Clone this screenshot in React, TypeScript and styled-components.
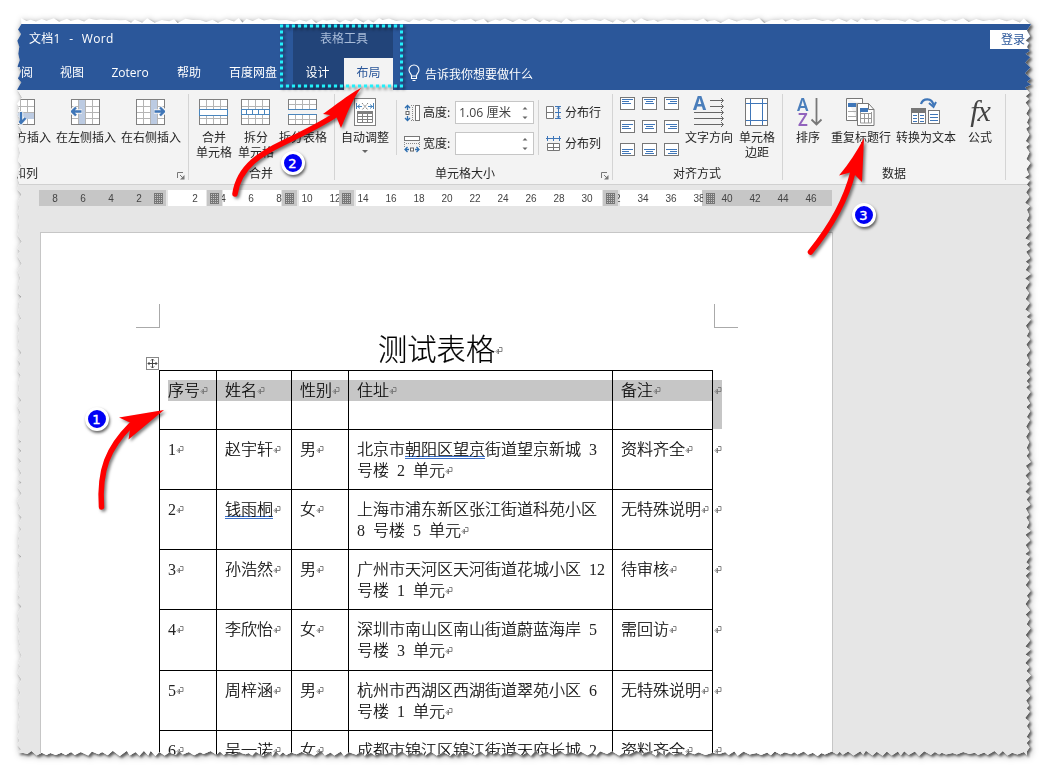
import React from "react";
import styled, { createGlobalStyle, css } from "styled-components";

const Global = createGlobalStyle`
  * { box-sizing: border-box; }
  body { margin: 0; background: #fff; overflow: hidden; }
  svg { display: block; }
`;

const ui = `"Open Sans", "Noto Sans CJK SC", sans-serif`;
const cjk = `"Noto Sans CJK SC", sans-serif`;

/* ---------- torn paper outline ---------- */
const W = 1016;
const H = 740;

function tornOutline(): string {
  let seed = 11;
  const rnd = () => {
    seed = (seed * 16807) % 2147483647;
    return seed / 2147483647;
  };
  const pts: string[] = [];
  const add = (x: number, y: number) => pts.push(`${x.toFixed(1)}px ${y.toFixed(1)}px`);
  let up = true;
  for (let x = 5; x < W - 6; x += 3.5 + rnd() * 5) {
    add(x, up ? 1 + rnd() * 2 : 3 + rnd() * 3);
    up = !up;
  }
  for (let y = 4; y < H - 5; y += 2.5 + rnd() * 4) {
    add(up ? W - 1 - rnd() * 2 : W - 5 - rnd() * 2, y);
    up = !up;
  }
  for (let x = W - 5; x > 5; x -= 2.5 + rnd() * 5) {
    add(x, up ? H - 1 - rnd() * 2 : H - 4 - rnd() * 2.5);
    up = !up;
  }
  for (let y = H - 4; y > 4; y -= 3 + rnd() * 5) {
    add(up ? 1 + rnd() * 1.5 : 3 + rnd() * 3, y);
    up = !up;
  }
  return `polygon(${pts.join(",")})`;
}

const Stage = styled.div`
  position: relative;
  width: 1048px;
  height: 773px;
  padding: 17px 16px;
  overflow: hidden;
  background: #fff;
`;
const Shadow = styled.div`
  filter: drop-shadow(2px 2px 1px rgba(0, 0, 0, 0.5)) drop-shadow(1px 1px 3px rgba(0, 0, 0, 0.35));
`;
const Sheet = styled.div`
  width: ${W}px;
  height: ${H}px;
  padding-top: 7px;
  background: #fff;
  clip-path: ${tornOutline()};
  display: flex;
  flex-direction: column;
  font: 12px/15px ${ui};
  color: #262626;
`;

/* ---------- header ---------- */
const Header = styled.header`
  height: 66px;
  flex: none;
  background: #2b579a;
  color: #fff;
  display: grid;
  grid-template-columns: 277px 100px 1fr;
`;
const HeaderPart = styled.div<{ $dark?: boolean }>`
  display: grid;
  grid-template-rows: 34px 32px;
  background: ${(p) => (p.$dark ? "#224479" : "transparent")};
`;
const DocTitle = styled.div`
  padding: 7px 0 0 13px;
  white-space: pre;
  line-height: 16px;
  font-size: 12px;
  letter-spacing: 0.3px;
  word-spacing: 0.8px;
  font-family: ${ui};
`;
const ToolTitle = styled.div`
  padding: 7px 0 0 2px;
  text-align: center;
  color: #a9bcd9;
  line-height: 16px;
`;
const Tabs = styled.nav`
  display: flex;
  line-height: 29px;
  white-space: nowrap;
`;
const Tab = styled.span<{ $w: number; $on?: boolean }>`
  width: ${(p) => p.$w}px;
  flex: none;
  text-align: center;
  ${(p) =>
    p.$on &&
    css`
      background: #f3f3f3;
      color: #2b579a;
    `}
`;
const LeftTabs = styled(Tabs)`
  margin-left: -7px;
`;
const TellMe = styled.div`
  display: flex;
  gap: 5px;
  padding: 6px 0 0 15px;
  line-height: 22px;
`;
const SignRow = styled.div`
  display: flex;
  justify-content: flex-end;
  padding-top: 6px;
`;
const SignIn = styled.span`
  width: 42px;
  height: 19px;
  padding-left: 11px;
  background: #fff;
  color: #2b579a;
  line-height: 19px;
`;

/* ---------- ribbon ---------- */
const Ribbon = styled.section`
  height: 95px;
  flex: none;
  padding: 4px 0;
  display: flex;
  background: #f3f3f3;
  border-bottom: 1px solid #d0d0d0;
  font-family: ${cjk};
`;
const Group = styled.div<{ $w: number; $pad?: number }>`
  position: relative;
  width: ${(p) => p.$w}px;
  flex: none;
  display: grid;
  grid-template-rows: 71px 15px;
  border-right: 1px solid #d4d4d4;
  padding-left: ${(p) => p.$pad ?? 0}px;
`;
const Row = styled.div<{ $shift?: number }>`
  display: flex;
  margin-left: ${(p) => p.$shift ?? 0}px;
`;
const BigButton = styled.div<{ $w: number; $ml?: number }>`
  width: ${(p) => p.$w}px;
  margin-left: ${(p) => p.$ml ?? 0}px;
  flex: none;
  padding-top: 4px;
  display: flex;
  flex-direction: column;
  align-items: center;
  text-align: center;
  white-space: nowrap;
`;
const ButtonText = styled.span`
  margin-top: 1px;
  white-space: pre;
`;
const GroupLabel = styled.div<{ $ml: number }>`
  margin-left: ${(p) => p.$ml}px;
  white-space: nowrap;
`;
const Launcher = styled.svg`
  position: absolute;
  right: 3px;
  bottom: 0;
`;
const Rule = styled.div<{ $ml: number }>`
  width: 1px;
  height: 55px;
  margin: 6px 0 0 ${(p) => p.$ml}px;
  background: #d4d4d4;
`;
const SizeStack = styled.div<{ $ml: number }>`
  margin: 7px 0 0 ${(p) => p.$ml}px;
  display: flex;
  flex-direction: column;
  gap: 8px;
`;
const SizeRow = styled.div`
  height: 23px;
  display: flex;
  align-items: center;
`;
const SizeName = styled.span`
  width: 34px;
  padding: 0 0 2px 2px;
`;
const Spinner = styled.div`
  width: 79px;
  height: 23px;
  padding: 0 4px 0 3px;
  display: flex;
  align-items: center;
  justify-content: space-between;
  border: 1px solid #c6c6c6;
  background: #fff;
  color: #444;
  font-family: ${ui};
  font-size: 12.3px;
`;
const DistName = styled.span`
  padding: 0 0 2px 4px;
`;
const AlignGrid = styled.div`
  display: grid;
  grid-template-columns: repeat(3, 15px);
  grid-auto-rows: 13px;
  gap: 10px 7px;
  margin: 3px 6px 0 0;
`;
const LetterIcon = styled.svg`
  overflow: visible;
  font-family: "Noto Sans", sans-serif;
`;
const DirectionBox = styled.div`
  height: 30px;
  & > svg {
    margin-top: -2px;
  }
`;

function GridBase() {
  return (
    <>
      <rect x=".5" y=".5" width="28" height="25" fill="#fff" stroke="#808080" />
      <path d="M7.5 1v24M14.5 1v24M21.5 1v24M1 7.5h27M1 13.5h27M1 19.5h27" stroke="#b4b4b4" />
    </>
  );
}
const IconSvg = styled.svg<{ $odd: boolean }>`
  flex: none;
  margin-right: ${(p) => (p.$odd ? 1 : 0)}px;
`;
const Icon = ({ children, w = 29, h = 30 }: { children: React.ReactNode; w?: number; h?: number }) => (
  <IconSvg $odd={w % 2 === 1} width={w} height={h} viewBox={`0 -1 ${w} ${h}`}>
    {children}
  </IconSvg>
);
const InsertBelow = () => (
  <Icon>
    <GridBase />
    <rect x="7" y="14" width="21" height="6" fill="#bccbe2" />
    <path d="M15 12v11M10.500 19l4.500 5 4.500-5" stroke="#f3f3f3" fill="none" strokeWidth="4.500" />
    <path d="M15 13v10M10.500 19l4.500 5 4.500-5" stroke="#3f76b8" fill="none" strokeWidth="2.400" />
  </Icon>
);
const InsertLeft = () => (
  <Icon>
    <GridBase />
    <rect x="8" y="1" width="6" height="24" fill="#bccbe2" />
    <path d="M11 12.500H1M5 8l-4.500 4.500L5 17" stroke="#f3f3f3" fill="none" strokeWidth="4.500" />
    <path d="M10.500 12.500H1M5 8.500l-4 4 4 4" stroke="#3f76b8" fill="none" strokeWidth="2.400" />
  </Icon>
);
const InsertRight = () => (
  <Icon>
    <GridBase />
    <rect x="15" y="1" width="6" height="24" fill="#bccbe2" />
    <path d="M18 12.500h10M24 8l4.500 4.500L24 17" stroke="#f3f3f3" fill="none" strokeWidth="4.500" />
    <path d="M18.500 12.500H28M24 8.500l4 4-4 4" stroke="#3f76b8" fill="none" strokeWidth="2.400" />
  </Icon>
);
const MergeCells = () => (
  <Icon>
    <GridBase />
    <rect x=".5" y="10.500" width="28" height="6" fill="#fff" stroke="#4a86bd" />
  </Icon>
);
const SplitCells = () => (
  <Icon>
    <GridBase />
    <rect x=".5" y="10.500" width="28" height="5" fill="#fff" stroke="#4a86bd" />
    <path d="M5.500 10v6M11.500 10v6M17.500 10v6M23.500 10v6" stroke="#4a86bd" />
  </Icon>
);
const SplitTable = () => (
  <Icon>
    <rect x=".5" y=".5" width="28" height="10" fill="#fff" stroke="#808080" />
    <path d="M7.500 1v9M14.500 1v9M21.500 1v9M1 5.500h27" stroke="#b4b4b4" />
    <path d="M0 10.500h29" stroke="#4a86bd" />
    <rect x=".5" y="15.500" width="28" height="10" fill="#fff" stroke="#808080" />
    <path d="M7.500 16v9M14.500 16v9M21.500 16v9M1 20.500h27" stroke="#b4b4b4" />
    <path d="M0 15.500h29" stroke="#4a86bd" />
  </Icon>
);
const AutoFit = () => (
  <Icon w={22}>
    <rect x=".5" y="-.5" width="21" height="27" fill="#fff" stroke="#808080" />
    <path d="M2.500 4v6M19.500 4v6M3 7.500h5M14 7.500h5M6 5.500l-2.500 2L6 9.500M16 5.500l2.500 2-2.500 2" stroke="#4a86bd" fill="none" />
    <path d="M8 4l6 7M14 4l-6 7" stroke="#808080" strokeDasharray="1.500 .7" />
    <rect x="3" y="12" width="16" height="3" fill="#808080" />
    <path d="M3.500 15v8.500h15V15M8.500 15v8M13.500 15v8M4 17.500h14M4 20.500h14" stroke="#808080" fill="none" />
  </Icon>
);
const HeightIcon = () => (
  <svg width="17" height="18">
    <path d="M3.500 2v4M3.500 12v4M1 4l2.500-2.500L6 4M1 14l2.500 2.500L6 14" stroke="#2f6fb0" fill="none" strokeWidth="1.300" />
    <rect x="2" y="7.500" width="3" height="3" fill="#fff" stroke="#666" />
    <path d="M7 1.500h4M7 16.500h4M8.500 3v13" stroke="#888" strokeDasharray="1 1" />
    <rect x="11.500" y="1.500" width="4" height="15" fill="#fff" stroke="#777" />
  </svg>
);
const WidthIcon = () => (
  <svg width="17" height="18">
    <rect x=".5" y="1.500" width="15" height="4" fill="#fff" stroke="#777" />
    <path d="M.5 7v5M15.500 7v5M2 8.500h13" stroke="#888" strokeDasharray="1 1" />
    <path d="M1 14.500h4M11 14.500h4M3.500 12L1 14.500 3.500 17M12.500 12l2.500 2.500-2.500 2.500" stroke="#2f6fb0" fill="none" strokeWidth="1.300" />
    <rect x="6.500" y="13" width="3" height="3" fill="#fff" stroke="#666" />
  </svg>
);
const DistRows = () => (
  <svg width="15" height="16">
    <path d="M.5 1.500h7v12h-7zM.5 7.500h7" stroke="#777" fill="#fff" />
    <path d="M9 1.500h6M9 7.500h6M9 13.500h6M12.500 2v11M10.800 4l1.700-2 1.700 2M10.800 11l1.700 2 1.700-2" stroke="#3f76b8" fill="none" />
  </svg>
);
const DistCols = () => (
  <svg width="15" height="16">
    <path d="M1.500 7.500h12v7h-12zM7.500 7.500v7M1.500 11.500h12" stroke="#777" fill="#fff" />
    <path d="M1.500 0v5M7.500 0v5M13.500 0v5M0 2.500h15" stroke="#3f76b8" fill="none" />
  </svg>
);
const SpinArrows = () => (
  <svg width="8" height="17">
    <path d="M1.500 5.500L4 3l2.500 2.500zM1.500 12.500L4 15l2.500-2.500z" fill="#666" />
  </svg>
);
function AlignIcon({ v, h }: { v: number; h: number }) {
  const y0 = [2.5, 4.5, 6.5][v];
  const widths = [11, 7, 9];
  return (
    <svg width="15" height="13">
      <rect x=".5" y=".5" width="14" height="12" fill="#fff" stroke="#777" />
      {widths.map((w, i) => {
        const x = h === 0 ? 2 : h === 1 ? (15 - w) / 2 : 13 - w;
        return <path key={i} d={`M${x} ${y0 + i * 2}h${w}`} stroke="#3f76b8" />;
      })}
    </svg>
  );
}
const TextDirection = () => (
  <LetterIcon width="34" height="34" viewBox="0 0 34 34">
    <text x="1" y="14" fontSize="19" fontWeight="700" fill="#4a7ebb">A</text>
    <path d="M18 4.500h13M18 10.500h13M2 16.500h29M2 22.500h29M2 28.500h29" stroke="#666" />
    <path d="M29 2l2.500 2.500L29 7M29 8l2.500 2.500L29 13M29 14l2.500 2.500L29 19M29 20l2.500 2.500L29 25M29 26l2.500 2.500L29 31" stroke="#666" fill="none" />
  </LetterIcon>
);
const Margins = () => (
  <Icon w={23}>
    <rect x=".5" y="-.5" width="22" height="27" fill="#fff" stroke="#777" />
    <path d="M5.500 0v26M17.500 0v26M1 4.500h21M1 21.500h21" stroke="#3f76b8" />
  </Icon>
);
const SortIcon = () => (
  <LetterIcon width="24" height="30" viewBox="0 0 24 30">
    <text x="1" y="12.500" fontSize="17" fontWeight="600" fill="#4a7ebb">A</text>
    <text x="2" y="27.500" fontSize="17" fontWeight="600" fill="#9163bd">Z</text>
    <path d="M20.500 0v26M15.500 21.500l5 5 5-5" stroke="#777" strokeWidth="1.800" fill="none" />
  </LetterIcon>
);
const RepeatHeader = () => (
  <Icon w={29}>
    <path d="M.5-.5h16v5M.5-.5v22h11" fill="#fff" stroke="#777" />
    <path d="M2 7.500h9M2 12.500h9M2 17.500h9M10.500 4v17" stroke="#aaa" />
    <rect x="2" y="4" width="8" height="4" fill="#3f76b8" />
    <path d="M11.500 4.500h11l5.500 6v16H11.500z" fill="#fff" stroke="#777" />
    <path d="M22.500 4.500v6H28" fill="none" stroke="#777" />
    <path d="M14.500 10v14h11V13M14 14.500h11M14 19.500h11M18.500 14v10M22.500 14v10" stroke="#999" fill="none" />
    <rect x="14" y="9" width="8" height="4" fill="#3f76b8" />
  </Icon>
);
const ToText = () => (
  <Icon w={29}>
    <path d="M10 5C12-1 21-1.500 22.500 6" stroke="#3f76b8" fill="none" strokeWidth="2.200" />
    <path d="M18 4l4.500 4L25 3" stroke="#3f76b8" fill="none" strokeWidth="2" />
    <rect x=".5" y="9.500" width="14" height="15" fill="#fff" stroke="#777" />
    <rect x="0" y="9" width="15" height="5" fill="#777" />
    <path d="M7.500 14v11" stroke="#777" />
    <path d="M2 16.500h4M2 19.500h4M2 22.500h4M9 16.500h4M9 19.500h4M9 22.500h4" stroke="#3f76b8" />
    <rect x="17.500" y="11.500" width="11" height="13" fill="#fff" stroke="#777" />
    <path d="M19 15.500h8M19 18.500h8M19 21.500h8" stroke="#3f76b8" />
  </Icon>
);
const Fx = styled.span`
  height: 30px;
  font: italic 30px/26px "Liberation Serif", serif;
  letter-spacing: -1px;
  color: #444;
`;
const CornerMark = () => (
  <Launcher width="8" height="8">
    <path d="M.5 6V.5H6" stroke="#777" fill="none" />
    <path d="M3 3l3 3" stroke="#777" />
    <path d="M7.500 3v4.500H3z" fill="#777" />
  </Launcher>
);

/* ---------- ruler ---------- */
const Work = styled.main`
  flex: 1;
  background: #e6e6e6;
  padding: 5px 0 0 23px;
`;
const Ruler = styled.div`
  width: 793px;
  height: 16px;
  display: grid;
  overflow: hidden;
`;
const Layer = styled.div<{ $pad?: number }>`
  grid-area: 1 / 1;
  display: flex;
  padding-left: ${(p) => p.$pad ?? 0}px;
  font: 10px/17.5px "Liberation Sans", sans-serif;
  color: #444;
  overflow: hidden;
`;
const Segment = styled.i<{ $w: number; $c: string }>`
  flex: none;
  width: ${(p) => p.$w}px;
  background: ${(p) => p.$c};
`;
const Num = styled.span`
  flex: none;
  width: 28px;
  height: 16px;
  text-align: center;
`;
const Marker = styled.i<{ $ml: number }>`
  flex: none;
  width: 15px;
  margin-left: ${(p) => p.$ml}px;
  padding: 3px;
  background: #c6c6c6;
  &::before {
    content: "";
    display: block;
    height: 11px;
    background: repeating-linear-gradient(0deg, #777 0 1px, transparent 1px 2px),
      repeating-linear-gradient(90deg, #777 0 1px, #c6c6c6 1px 2px);
  }
`;
const segments: [number, string][] = [
  [127, "#c6c6c6"], [2, "#e6e6e6"], [38, "#fff"], [17, "#e6e6e6"], [58, "#fff"], [18, "#e6e6e6"],
  [40, "#fff"], [17, "#e6e6e6"], [246, "#fff"], [18, "#e6e6e6"], [82, "#fff"], [130, "#c6c6c6"],
];
const numbers = ["8", "6", "4", "2", "", ...Array.from({ length: 23 }, (_, i) => String(2 + i * 2))];
const markers = [112, 41, 60, 42, 249, 85];

/* ---------- page ---------- */
const Page = styled.article`
  width: 793px;
  height: 540px;
  margin: 26px 0 0 1px;
  border: 1px solid #c6c6c6;
  background: #fff;
  color: #000;
`;
const CropRow = styled.div`
  display: flex;
  justify-content: space-between;
  width: 602px;
  margin: 71px 0 0 95px;
`;
const Crop = styled.i<{ $right?: boolean }>`
  width: 24px;
  height: 24px;
  border: 0 solid #aaa;
  border-bottom-width: 1px;
  ${(p) => (p.$right ? "border-left-width: 1px;" : "border-right-width: 1px;")}
`;
const Heading = styled.h1`
  margin: 0 0 3px 337px;
  height: 39px;
  display: flex;
  align-items: center;
  font: 300 29.300px/39px ${cjk};
  -webkit-text-stroke: 0.2px #000;
`;
const TableArea = styled.div`
  display: flex;
  margin-left: 105px;
`;
const Handle = styled.svg`
  margin: -13px 0 0 0;
  flex: none;
`;
const Table = styled.div`
  width: 554px;
  border: 1px solid #000;
  border-width: 1px 0 0 1px;
`;
const TRow = styled.div<{ $h: number; $head?: boolean }>`
  display: grid;
  width: 563px;
  grid-template-columns: 57px 75px 57px 264px 100px 10px;
  height: ${(p) => p.$h}px;
  ${(p) =>
    p.$head &&
    css`
      background: linear-gradient(#c6c6c6, #c6c6c6) 8px 9px / 545px 21px no-repeat,
        linear-gradient(#c6c6c6, #c6c6c6) 553px 9px / 9px 49px no-repeat;
    `}
`;
const Cell = styled.div`
  border: 0 solid #000;
  border-width: 0 1px 1px 0;
  padding: 9px 0 0 8px;
  font: 300 16px/21px "Liberation Serif", "Noto Sans CJK SC", serif;
  word-spacing: 4px;
  white-space: nowrap;
`;
const EndCell = styled.div`
  padding: 9px 0 0 1px;
  line-height: 21px;
`;
const Line = styled.div`
  display: flex;
  height: 21px;
  white-space: pre;
`;
const Hanzi = styled.span`
  -webkit-text-stroke: 0.2px #000;
`;
const Latin = styled.span`
  color: #222;
`;
const Flagged = styled(Hanzi)`
  background: linear-gradient(#3a6fc8, #3a6fc8) 0 17px / 100% 1px no-repeat,
    linear-gradient(#3a6fc8, #3a6fc8) 0 19px / 100% 1px no-repeat;
`;
const MarkSvg = styled.svg`
  flex: none;
  margin-top: 7px;
`;
const Mark = () => (
  <MarkSvg width="8" height="8">
    <path d="M4 .5h3v4H2M3.500 2L1 4.500 3.500 7z" stroke="#777" fill="none" strokeWidth=".9" />
  </MarkSvg>
);

const rows: { h: number; cells: string[] }[] = [
  { h: 59, cells: ["序号", "姓名", "性别", "住址", "备注"] },
  { h: 60, cells: ["1", "赵宇轩", "男", "北京市[朝阳区望京]街道望京新城 3|号楼 2 单元", "资料齐全"] },
  { h: 60, cells: ["2", "[钱雨桐]", "女", "上海市浦东新区张江街道科苑小区|8 号楼 5 单元", "无特殊说明"] },
  { h: 60, cells: ["3", "孙浩然", "男", "广州市天河区天河街道花城小区 12|号楼 1 单元", "待审核"] },
  { h: 61, cells: ["4", "李欣怡", "女", "深圳市南山区南山街道蔚蓝海岸 5|号楼 3 单元", "需回访"] },
  { h: 60, cells: ["5", "周梓涵", "男", "杭州市西湖区西湖街道翠苑小区 6|号楼 1 单元", "无特殊说明"] },
  { h: 60, cells: ["6", "吴一诺", "女", "成都市锦江区锦江街道天府长城 2|号楼 3 单元", "资料齐全"] },
];

function CellText({ text }: { text: string }) {
  const lines = text.split("|");
  return (
    <Cell>
      {lines.map((l, i) => (
        <Line key={i}>
          {l.split(/(\[.*?\]|[ \d]+)/).filter(Boolean).map((part, j) => {
            if (part[0] === "[") return <Flagged key={j}>{part.slice(1, -1)}</Flagged>;
            return /^[ \d]/.test(part) ? <Latin key={j}>{part}</Latin> : <Hanzi key={j}>{part}</Hanzi>;
          })}
          {i === lines.length - 1 && <Mark />}
        </Line>
      ))}
    </Cell>
  );
}

/* ---------- annotations ---------- */
const Overlay = styled.svg`
  position: absolute;
  left: 0;
  top: 0;
  filter: drop-shadow(2px 2px 1.5px rgba(0, 0, 0, 0.5));
`;
const Badge = styled.div<{ $x: number; $y: number }>`
  position: absolute;
  left: ${(p) => p.$x - 12}px;
  top: ${(p) => p.$y - 12}px;
  width: 24px;
  height: 24px;
  border: 3px solid #fff;
  border-radius: 50%;
  background: #0000f5;
  color: #fff;
  box-shadow: 1px 2px 3px 0 rgba(0, 0, 0, 0.6);
  text-align: center;
  font: 13px/19px "DejaVu Sans", sans-serif;
  -webkit-text-stroke: 0.4px #fff;
`;

export default function App() {
  return (
    <Stage>
      <Global />
      <Shadow>
        <Sheet>
          <Header>
            <HeaderPart>
              <DocTitle>文档1  -  Word</DocTitle>
              <LeftTabs>
                <Tab $w={24}>审阅</Tab>
                <Tab $w={78}>视图</Tab>
                <Tab $w={38}>Zotero</Tab>
                <Tab $w={80}>帮助</Tab>
                <Tab $w={44}>百度网盘</Tab>
              </LeftTabs>
            </HeaderPart>
            <HeaderPart $dark>
              <ToolTitle>表格工具</ToolTitle>
              <Tabs>
                <Tab $w={49}>设计</Tab>
                <Tab $w={2} />
                <Tab $w={49} $on>布局</Tab>
              </Tabs>
            </HeaderPart>
            <HeaderPart>
              <SignRow>
                <SignIn>登录</SignIn>
              </SignRow>
              <TellMe>
                <svg width="12" height="18" fill="none" stroke="#fff" strokeWidth="1.100">
                  <path d="M3.500 12C3.500 9.500 1 9 1 6a5 5 0 0 1 10 0c0 3-2.500 3.500-2.500 6zM3.500 12v2.500h5V12M4.500 16.500h3" />
                </svg>
                告诉我你想要做什么
              </TellMe>
            </HeaderPart>
          </Header>

          <Ribbon>
            <Group $w={173}>
              <Row $shift={-25}>
                <BigButton $w={60}><InsertBelow /><ButtonText>在下方插入</ButtonText></BigButton>
                <BigButton $w={60} $ml={5}><InsertLeft /><ButtonText>在左侧插入</ButtonText></BigButton>
                <BigButton $w={60} $ml={5}><InsertRight /><ButtonText>在右侧插入</ButtonText></BigButton>
              </Row>
              <GroupLabel $ml={-14}>行和列</GroupLabel>
              <CornerMark />
            </Group>
            <Group $w={146} $pad={7}>
              <Row>
                <BigButton $w={36}><MergeCells /><ButtonText>{"合并\n单元格"}</ButtonText></BigButton>
                <BigButton $w={36} $ml={6}><SplitCells /><ButtonText>{"拆分\n单元格"}</ButtonText></BigButton>
                <BigButton $w={48} $ml={5}><SplitTable /><ButtonText>拆分表格</ButtonText></BigButton>
              </Row>
              <GroupLabel $ml={53}>合并</GroupLabel>
            </Group>
            <Group $w={278} $pad={6}>
              <Row>
                <BigButton $w={48}>
                  <AutoFit />
                  <ButtonText>自动调整</ButtonText>
                  <svg width="6" height="12"><path d="M0 6h6L3 9z" fill="#666" /></svg>
                </BigButton>
                <Rule $ml={7} />
                <SizeStack $ml={7}>
                  <SizeRow><HeightIcon /><SizeName>高度:</SizeName><Spinner>1.06 厘米<SpinArrows /></Spinner></SizeRow>
                  <SizeRow><WidthIcon /><SizeName>宽度:</SizeName><Spinner><span /><SpinArrows /></Spinner></SizeRow>
                </SizeStack>
                <Rule $ml={4} />
                <SizeStack $ml={7}>
                  <SizeRow><DistRows /><DistName>分布行</DistName></SizeRow>
                  <SizeRow><DistCols /><DistName>分布列</DistName></SizeRow>
                </SizeStack>
              </Row>
              <GroupLabel $ml={94}>单元格大小</GroupLabel>
              <CornerMark />
            </Group>
            <Group $w={170} $pad={7}>
              <Row>
                <AlignGrid>
                  {[0, 1, 2].map((v) => [0, 1, 2].map((h) => <AlignIcon key={`${v}${h}`} v={v} h={h} />))}
                </AlignGrid>
                <BigButton $w={48}>
                  <DirectionBox><TextDirection /></DirectionBox>
                  <ButtonText>文字方向</ButtonText>
                </BigButton>
                <BigButton $w={36} $ml={6}><Margins /><ButtonText>{"单元格\n边距"}</ButtonText></BigButton>
              </Row>
              <GroupLabel $ml={53}>对齐方式</GroupLabel>
            </Group>
            <Group $w={223} $pad={13}>
              <Row>
                <BigButton $w={24}><SortIcon /><ButtonText>排序</ButtonText></BigButton>
                <BigButton $w={60} $ml={11}><RepeatHeader /><ButtonText>重复标题行</ButtonText></BigButton>
                <BigButton $w={60} $ml={5}><ToText /><ButtonText>转换为文本</ButtonText></BigButton>
                <BigButton $w={24} $ml={12}><Fx>fx</Fx><ButtonText>公式</ButtonText></BigButton>
              </Row>
              <GroupLabel $ml={86}>数据</GroupLabel>
            </Group>
          </Ribbon>

          <Work>
            <Ruler>
              <Layer>{segments.map(([w, c], i) => <Segment key={i} $w={w} $c={c} />)}</Layer>
              <Layer $pad={2}>{numbers.map((n, i) => <Num key={i}>{n}</Num>)}</Layer>
              <Layer>{markers.map((m, i) => <Marker key={i} $ml={m} />)}</Layer>
            </Ruler>
            <Page>
              <CropRow>
                <Crop />
                <Crop $right />
              </CropRow>
              <Heading>测试表格<Mark /></Heading>
              <TableArea>
                <Handle width="13" height="13">
                  <rect x=".5" y=".5" width="12" height="12" fill="#fff" stroke="#888" />
                  <path d="M6.500 2v9M2 6.500h9M5 3.500l1.500-1.500L8 3.500M5 9.500l1.500 1.500L8 9.500M3.500 5L2 6.500 3.500 8M9.500 5L11 6.500 9.500 8" stroke="#444" fill="none" />
                </Handle>
                <Table>
                  {rows.map((r, i) => (
                    <TRow key={i} $h={r.h} $head={i === 0}>
                      {r.cells.map((c, j) => <CellText key={j} text={c} />)}
                      <EndCell><Mark /></EndCell>
                    </TRow>
                  ))}
                </Table>
              </TableArea>
            </Page>
          </Work>
        </Sheet>
      </Shadow>

      <Overlay width="1048" height="773">
        <rect x="281.500" y="26" width="120" height="60" fill="none" stroke="#22f0fa" strokeWidth="3" strokeDasharray="3.200 2.800" strokeDashoffset="1.600" />
        <g fill="none" stroke="#f00" strokeWidth="5.500" strokeLinecap="round">
          <path d="M101.500 507C99 470 108 448 131 425" />
          <path d="M235 194C239 166 262 153 285 142S322 124 337 114" />
          <path d="M810.500 252C830 228 846 200 853 172" />
        </g>
        <g fill="#f00">
          <path d="M164 410L119 417.500 131 423 128.500 439.500z" />
          <path d="M361 88C347 95 335 106 323 114L336 116 341 128C347 114 352 100 361 88z" />
          <path d="M864 138C857 151 849 164 839 175.500L852 172 862 182z" />
        </g>
      </Overlay>
      <Badge $x={96.5} $y={418.5}>1</Badge>
      <Badge $x={292.5} $y={162.5}>2</Badge>
      <Badge $x={863.5} $y={214.5}>3</Badge>
    </Stage>
  );
}
